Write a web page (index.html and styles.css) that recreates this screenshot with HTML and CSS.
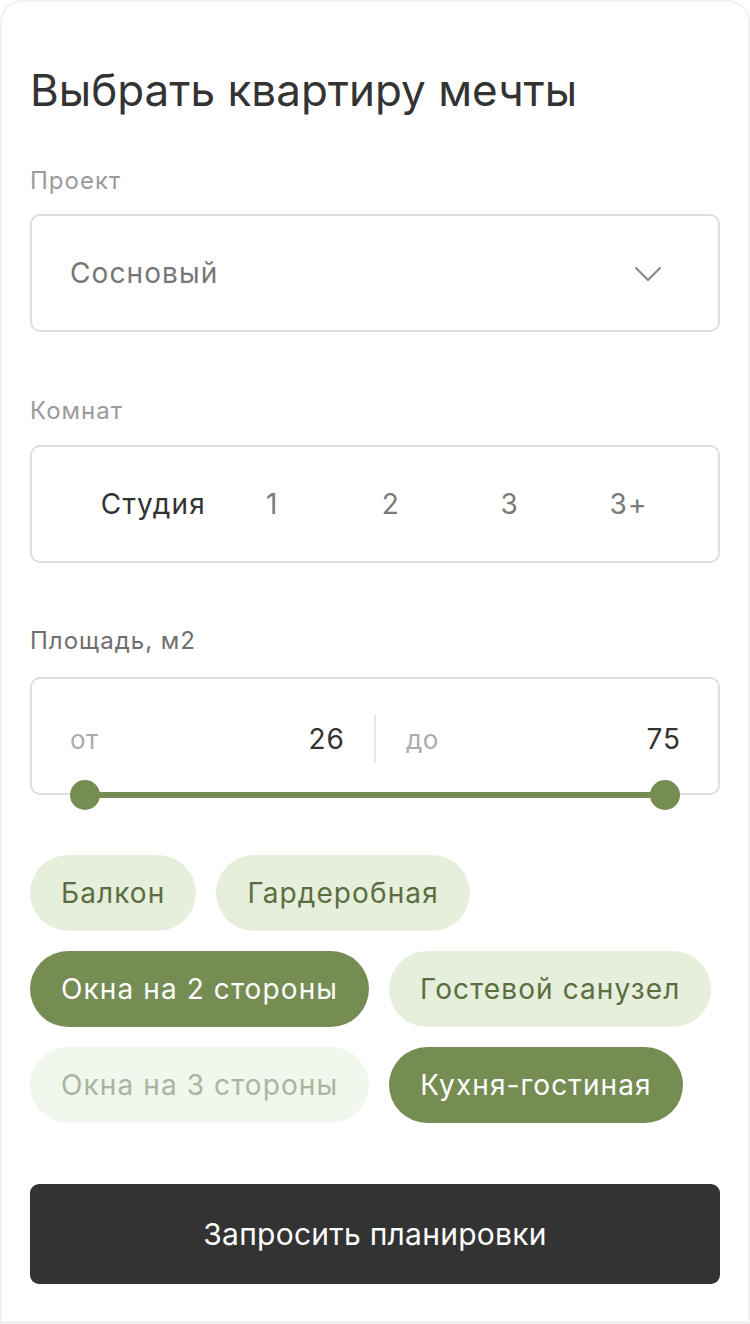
FILE: index.html
```html
<!DOCTYPE html>
<html lang="ru">
<head>
<meta charset="utf-8">
<title>Выбрать квартиру мечты</title>
<link rel="stylesheet" href="styles.css">
</head>
<body>
<div class="card">
  <h1 class="title">Выбрать квартиру мечты</h1>

  <div class="label label-project">Проект</div>
  <div class="box select">
    <span class="select-value">Сосновый</span>
    <svg class="chevron" width="28" height="16" viewBox="0 0 28 16"><path d="M1.5 1.5 L14 14 L26.5 1.5" fill="none" stroke="#8a8a8a" stroke-width="2.2"/></svg>
  </div>

  <div class="label label-rooms">Комнат</div>
  <div class="box rooms">
    <span class="room active">Студия</span>
    <span class="room">1</span>
    <span class="room">2</span>
    <span class="room">3</span>
    <span class="room">3+</span>
  </div>

  <div class="label label-area">Площадь, м2</div>
  <div class="box area">
    <div class="half">
      <span class="pre">от</span>
      <span class="num">26</span>
    </div>
    <div class="divider"></div>
    <div class="half">
      <span class="pre">до</span>
      <span class="num">75</span>
    </div>
    <div class="slider">
      <span class="thumb"></span>
      <span class="track"></span>
      <span class="thumb"></span>
    </div>
  </div>

  <div class="chips">
    <div class="chip-row">
      <span class="chip">Балкон</span>
      <span class="chip">Гардеробная</span>
    </div>
    <div class="chip-row">
      <span class="chip on">Окна на 2 стороны</span>
      <span class="chip">Гостевой санузел</span>
    </div>
    <div class="chip-row">
      <span class="chip off">Окна на 3 стороны</span>
      <span class="chip on">Кухня-гостиная</span>
    </div>
  </div>

  <button class="submit">Запросить планировки</button>
</div>
</body>
</html>
```

FILE: styles.css
```css
* { box-sizing: border-box; }
html, body { margin: 0; padding: 0; background: #ffffff; }
body { font-family: Inter, "Noto Sans", sans-serif; color: #333; }

.card {
  height: 1324px;
  border: 2px solid #f1f1f1;
  border-bottom-width: 3px;
  border-radius: 22px 22px 0 0;
  background: #fff;
  padding: 62px 28px 0 28px;
}

.title {
  margin: 0;
  font-size: 44px;
  line-height: 53px;
  font-weight: 400;
  color: #333;
}

.label {
  font-size: 24px;
  line-height: 26px;
  letter-spacing: 1px;
  color: #9a9a9a;
  margin-bottom: 20px;
}
.label-project { margin-top: 51px; }
.label-rooms { margin-top: 66px; margin-bottom: 21px; }
.label-area { margin-top: 65px; color: #6e6e6e; margin-bottom: 23px; }

.box {
  height: 118px;
  border: 2px solid #dedede;
  border-radius: 10px;
  background: #fff;
}

.select {
  display: flex;
  align-items: center;
  justify-content: space-between;
  padding: 0 56px 0 38px;
}
.select-value { font-size: 28px; letter-spacing: 1.1px; color: #777; }
.chevron { display: block; margin-top: 2px; }

.rooms {
  display: grid;
  grid-template-columns: repeat(5, 1fr);
  align-items: center;
  justify-items: center;
  padding: 0 30px 0 62px;
}
.room { font-size: 28px; letter-spacing: 1.2px; color: #7a7a7a; }
.room.active { color: #333; }

.area {
  position: relative;
  display: flex;
  align-items: flex-start;
  padding: 36px 38px 0 38px;
}
.half {
  flex: 1;
  display: flex;
  justify-content: space-between;
  align-items: baseline;
  height: 48px;
  line-height: 48px;
}
.pre { font-size: 26px; letter-spacing: 0.5px; color: #ababab; }
.num { font-size: 28px; letter-spacing: 1px; color: #333; margin-right: -1px; }
.divider {
  width: 2px;
  height: 48px;
  background: #e6e6e6;
  margin: 0 30px;
}

.slider {
  position: absolute;
  left: 38px;
  right: 38px;
  bottom: -17px;
  display: flex;
  align-items: center;
}
.thumb {
  width: 30px;
  height: 30px;
  border-radius: 50%;
  background: #758c53;
  flex: none;
}
.track {
  flex: 1;
  height: 6px;
  background: #758c53;
  margin: 0 -2px;
}

.chips {
  display: flex;
  flex-direction: column;
  gap: 20px;
  margin-top: 60px;
}
.chip-row {
  display: flex;
  gap: 20px;
}
.chip {
  height: 76px;
  border-radius: 38px;
  padding: 0 31px;
  display: inline-flex;
  align-items: center;
  font-size: 28px;
  letter-spacing: 1.1px;
  background: #e6efdb;
  color: #5b6e41;
}
.chip.on { background: #758c53; color: #fff; }
.chip.off { background: #f2f7ed; color: #a9b59e; }

.submit {
  display: block;
  width: 100%;
  height: 100px;
  margin-top: 61px;
  border: 0;
  border-radius: 9px;
  background: #333333;
  color: #fff;
  font-family: Inter, "Noto Sans", sans-serif;
  font-size: 30px;
  letter-spacing: 0.25px;
}
```
